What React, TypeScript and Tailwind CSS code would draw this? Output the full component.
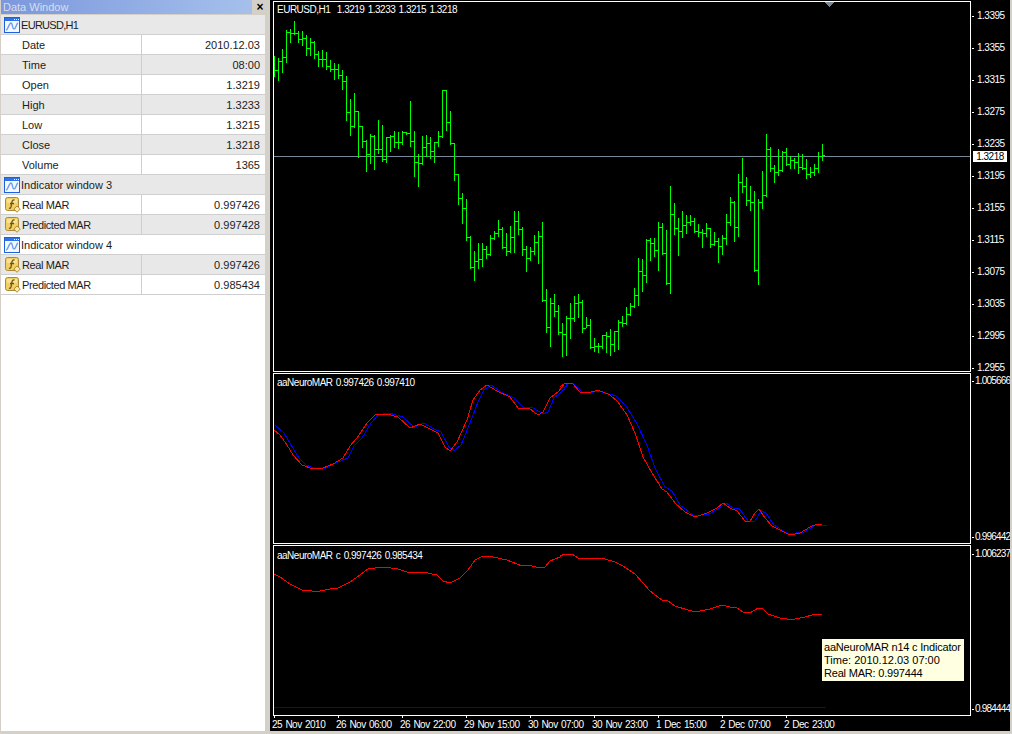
import React from "react";

type Bar = [number, number, number];
const z3: Bar[] = [[168,228,210],[174,240,184],[147,216,172],[90,186,96],[87,126,99],[63,102,99],[93,126,117],[93,135,114],[105,165,144],[114,165,126],[123,174,162],[153,198,178],[150,198,178],[157,207,198],[180,213,207],[189,237,207],[192,234,225],[210,267,243],[228,360,336],[297,405,378],[279,381,333],[333,471,378],[378,441,423],[420,513,462],[402,489,408],[405,507,447],[360,459,447],[375,483,477],[411,486,412],[405,453,408],[393,441,426],[396,444,426],[393,432,396],[396,402,399],[303,438,423],[393,528,485],[462,558,488],[408,492,441],[405,468,430],[411,474,453],[426,486,426],[393,438,408],[270,411,270],[270,390,366],[333,432,430],[430,540,521],[522,612,594]];
const z4: Bar[] = [[39,129,85],[57,180,172],[168,264,262],[213,300,244],[189,264,236],[189,258,206],[198,234,222],[165,225,175],[153,177,158],[120,168,148],[141,204,200],[159,225,214],[138,216,170],[93,216,124],[93,162,148]];
const z5: Bar[] = [[381,465,448],[438,513,475],[441,480,453],[405,462,426],[393,489,408],[366,603,600],[567,696,680],[594,738,610],[582,648,633],[615,702,696],[669,768,702],[648,765,655],[609,714,655],[588,663,610],[582,651,606],[600,696,685],[651,681,675],[657,744,742],[714,753,739],[729,756,739],[705,744,706],[696,756,708],[687,765,732],[693,753,693],[660,747,667],[648,678,670],[621,672,642],[609,645,618],[564,621,585],[474,615,513],[477,573,526],[417,546,420],[414,480,430],[414,468,450],[366,510,382],[369,462,458],[390,552,550],[258,579,342],[309,402,384],[354,465,393],[333,411,376],[345,399,367],[345,375,364],[354,396,393],[372,408,397],[387,441,400],[369,408,385],[384,441,432],[396,435,423],[414,486,438],[405,462,415],[342,432,365],[291,375,307],[303,423,380],[222,408,246],[174,276,259],[231,315,300],[258,330,306],[273,513,510],[297,552,307],[213,324,286],[102,288,147],[141,213,204],[195,246,216],[147,225,211],[153,213,156],[144,195,192],[168,204,180],[174,204,187],[159,219,202],[162,207,204],[177,234,223],[201,231,217],[192,225,205],[156,216,168],[132,180,166]];

const bars = [
  ...z3.map((b) => b.map((v) => Math.round(v / 3))),
  ...z4.map((b) => b.map((v) => Math.round(v / 3) + 180)),
  ...z5.map((b) => b.map((v) => Math.round(v / 3) + 100)),
];

type P = [number, number];
const pts = (list: P[], ox: number, oy: number) =>
  list.map(([x, y]) => `${Math.round(ox + x / 3)},${Math.round(oy + y / 3)}`).join(" ");

const redA: P[] = [[12,180],[30,195],[50,225],[70,255],[95,285],[130,297],[160,295],[190,282],[220,265],[240,228],[262,205],[290,158],[315,135],[350,131],[385,142],[420,175],[450,163],[480,177],[505,190],[525,232],[540,243],[560,215],[590,150],[610,90],[630,60],[650,46],[680,62],[720,80],[745,115],[780,116],[805,135],[820,125],[840,85],[865,65],[885,40]];
const blueA: P[] = [[12,165],[40,190],[60,225],[85,265],[105,285],[135,297],[165,294],[195,280],[230,265],[250,228],[272,205],[300,158],[322,135],[355,130],[395,142],[430,170],[458,160],[490,177],[510,185],[535,232],[550,243],[570,225],[598,160],[620,95],[640,60],[660,46],[690,66],[730,85],[755,112],[785,115],[815,133],[830,125],[850,85],[875,62],[893,40]];
const redB: P[] = [[0,50],[15,38],[35,38],[60,65],[85,69],[115,60],[150,75],[175,95],[200,135],[225,190],[250,260],[275,310],[305,358],[322,365],[345,400],[375,425],[405,440],[440,430],[470,415],[490,400],[510,415],[530,422],[555,452],[570,452],[585,428],[598,418],[615,445],[635,467],[660,480],[690,495],[720,490],[750,472],[770,463],[785,463]];
const blueB: P[] = [[0,68],[20,38],[40,42],[62,65],[85,69],[115,62],[165,77],[195,108],[225,155],[258,225],[283,295],[313,350],[333,362],[358,405],[400,438],[445,432],[470,418],[495,400],[515,414],[535,415],[560,452],[582,453],[600,422],[615,428],[638,465],[680,492],[730,487],[765,466],[797,466]];
const cA: P[] = [[12,103],[30,110],[60,133],[95,150],[125,154],[150,154],[180,146],[205,144],[240,125],[270,105],[295,88],[340,82],[385,88],[420,99],[460,97],[500,106],[520,122],[540,130],[570,115],[595,90],[615,60],[640,49],[670,50],[710,60],[755,78],[775,75],[810,85],[825,80],[840,62],[870,50]];
const cB: P[] = [[0,32],[15,28],[35,28],[55,40],[75,43],[85,40],[135,41],[165,50],[190,62],[225,88],[250,115],[270,138],[305,165],[325,168],[345,182],[385,195],[395,199],[420,197],[450,192],[485,181],[510,187],[530,188],[550,202],[570,205],[595,189],[605,190],[625,208],[660,218],[680,223],[705,223],[735,217],[755,211],[770,208],[785,208]];

function WindowIcon() {
  return (
    <svg width="16" height="16" viewBox="0 0 16 16" className="shrink-0" shapeRendering="crispEdges">
      <rect x="0.5" y="0.5" width="15" height="15" rx="1" fill="#f4f8ff" stroke="#1f62d8" />
      <rect x="1" y="1" width="14" height="3" fill="#2f74e4" />
      <rect x="10" y="2" width="1" height="1" fill="#fff" />
      <rect x="12" y="2" width="1" height="1" fill="#fff" />
      <rect x="14" y="2" width="1" height="1" fill="#fff" />
      <path d="M2 13 C4 13 5 6 7 6 C9 6 8 12 10 12 C12 12 12 7 14 6" fill="none" stroke="#6f9ce8" strokeWidth="1.4" shapeRendering="auto" />
    </svg>
  );
}

function FuncIcon() {
  return (
    <svg width="16" height="16" viewBox="0 0 16 16" className="shrink-0">
      <rect x="0.5" y="0.5" width="13" height="13" rx="2" fill="#f2cf62" stroke="#a98a3c" />
      <rect x="2" y="2" width="10" height="4" rx="1" fill="#f8e294" />
      <path d="M9.5 3 C7.5 2.6 7 4 6.8 5.5 L6 10 C5.8 11.2 5 11.5 4 11 M5 6.5 L9 6.5" fill="none" stroke="#6b5414" strokeWidth="1.3" />
      <path d="M12 9 L15.3 12 L12 15.3 L8.8 12 Z" fill="#fbe9a8" stroke="#b58a28" />
    </svg>
  );
}

function HeaderRow({ label, gray, tight }: { label: string; gray?: boolean; tight?: boolean }) {
  return (
    <div className={`flex h-[20px] items-center border-b border-[#cfcfcf] pl-[3px] ${gray ? "bg-[#e8e8e8]" : "bg-white"}`}>
      <WindowIcon />
      <span className={`mt-[2px] ml-[1px] ${tight ? "tracking-[-0.7px]" : ""}`}>{label}</span>
    </div>
  );
}

function DataRow({ label, value, gray, icon }: { label: string; value: string; gray?: boolean; icon?: boolean }) {
  return (
    <div className={`flex h-[20px] items-center border-b border-[#cfcfcf] ${gray ? "bg-[#e8e8e8]" : "bg-white"}`}>
      <div className={`flex h-full w-[140px] items-center ${icon ? "pl-[4px]" : "pl-[21px]"}`}>
        {icon && <FuncIcon />}
        <span className={`mt-[2px] ${icon ? "ml-[1px] tracking-[-0.4px]" : ""}`}>{label}</span>
      </div>
      <div className="flex h-full flex-1 items-center justify-end border-l border-[#cfcfcf] pt-[2px] pr-[5px]">{value}</div>
    </div>
  );
}

function AxisLabel({ text, wide }: { text: string; wide?: boolean }) {
  return (
    <div className="flex h-[14px] items-center whitespace-nowrap">
      <span className={`ml-[1px] h-px w-[2px] bg-white ${wide ? "mr-[1px]" : "mr-[3px]"}`} />
      <span className={wide ? "tracking-[-0.8px]" : ""}>{text}</span>
    </div>
  );
}

const chartText = "text-[10px] tracking-[-0.5px] [word-spacing:1px] text-white leading-[14px]";
const prices = ["1.3395","1.3355","1.3315","1.3275","1.3235","1.3195","1.3155","1.3115","1.3075","1.3035","1.2995","1.2955"];
const times = ["25 Nov 2010","26 Nov 06:00","26 Nov 22:00","29 Nov 15:00","30 Nov 07:00","30 Nov 23:00","1 Dec 15:00","2 Dec 07:00","2 Dec 23:00"];

export default function App() {
  return (
    <div className="flex h-[734px] w-[1012px] overflow-hidden bg-[#d4d0c8] font-['Liberation_Sans',sans-serif] text-[11px] text-[#1c1c1c]">
      <div className="flex h-[731px] w-[270px] flex-col">
        <div className="flex h-[15px] shrink-0 items-start pl-[1px]">
          <div className="flex h-[14px] w-[251px] items-center bg-gradient-to-r from-[#7c97dc] to-[#a6c0ec] pl-[2px] text-[11px] text-[#d6deec]">
            Data Window
          </div>
          <div className="flex h-[14px] flex-1 items-center justify-center pr-[2px] text-[12px] leading-none font-bold text-black">×</div>
        </div>
        <div className="ml-[1px] flex w-[264px] flex-1 flex-col bg-white">
          <HeaderRow label="EURUSD,H1" gray tight />
          <DataRow label="Date" value="2010.12.03" />
          <DataRow label="Time" value="08:00" gray />
          <DataRow label="Open" value="1.3219" />
          <DataRow label="High" value="1.3233" gray />
          <DataRow label="Low" value="1.3215" />
          <DataRow label="Close" value="1.3218" gray />
          <DataRow label="Volume" value="1365" />
          <HeaderRow label="Indicator window 3" gray />
          <DataRow icon label="Real MAR" value="0.997426" />
          <DataRow icon label="Predicted MAR" value="0.997428" gray />
          <HeaderRow label="Indicator window 4" />
          <DataRow icon label="Real MAR" value="0.997426" gray />
          <DataRow icon label="Predicted MAR" value="0.985434" />
        </div>
      </div>

      <div className={`relative flex h-[731px] w-[740px] flex-col gap-px overflow-hidden bg-black pt-px pl-[3px] ${chartText}`}>
        {/* price pane */}
        <div className="flex h-[371px] shrink-0">
          <div className="relative h-full w-[698px] shrink-0 border border-white">
            <svg width="696" height="369" viewBox="274 2 696 369" className="block" shapeRendering="crispEdges">
              <rect x="274" y="156" width="696" height="1" fill="#778899" />
              <path d="M825 2 L834 2 L829.5 7 Z" fill="#778899" />
              {bars.map((b, i) => {
                const x = 274 + i * 4;
                const prev = i > 0 ? bars[i - 1][2] : b[2];
                return (
                  <g key={i} fill="#00ff00">
                    <rect x={x} y={b[0]} width="1" height={b[1] - b[0] + 1} />
                    <rect x={x - 1} y={prev} width="1" height="1" />
                    <rect x={x + 1} y={b[2]} width="2" height="1" />
                  </g>
                );
              })}
            </svg>
            <div className="absolute top-px left-[3px] whitespace-pre">EURUSD,H1  1.3219 1.3233 1.3215 1.3218</div>
          </div>
          <div className="relative flex flex-col gap-[18px] pt-[8px]">
            {prices.map((p) => (
              <AxisLabel key={p} text={p} />
            ))}
            <div className="absolute top-[150px] left-[2px] flex h-[11px] w-[34px] items-center justify-center bg-white text-black">1.3218</div>
          </div>
        </div>

        {/* indicator window 3 */}
        <div className="flex h-[171px] shrink-0">
          <div className="relative h-full w-[698px] shrink-0 border border-white">
            <svg width="696" height="169" viewBox="274 374 696 169" className="block" shapeRendering="crispEdges">
              <polyline points={pts(blueA, 271, 370) + " " + pts(blueB, 561, 370)} fill="none" stroke="#0000ff" strokeWidth="1" />
              <polyline points={pts(redA, 270, 370) + " " + pts(redB, 560, 370)} fill="none" stroke="#ff0000" strokeWidth="1" />
            </svg>
            <div className="absolute top-[2px] left-[3px] whitespace-pre">aaNeuroMAR 0.997426 0.997410</div>
          </div>
          <div className="flex flex-col justify-between pt-px">
            <AxisLabel wide text="1.005666" />
            <AxisLabel wide text="0.996442" />
          </div>
        </div>

        {/* indicator window 4 */}
        <div className="flex h-[171px] shrink-0">
          <div className="relative h-full w-[698px] shrink-0 border border-white">
            <svg width="696" height="169" viewBox="274 546 696 169" className="block" shapeRendering="crispEdges">
              <rect x="274" y="707" width="552" height="1" fill="#0000c8" />
              <polyline points={pts(cA, 270, 540) + " " + pts(cB, 560, 545)} fill="none" stroke="#ff0000" strokeWidth="1" />
            </svg>
            <div className="absolute top-[3px] left-[3px] whitespace-pre">aaNeuroMAR c 0.997426 0.985434</div>
            <div className="absolute top-[93px] left-[548px] flex h-[42px] w-[142px] flex-col justify-center bg-[#ffffe1] pl-[2px] text-[11px] leading-[13px] tracking-normal whitespace-nowrap text-black [word-spacing:0px]">
              <span className="tracking-[-0.2px]">aaNeuroMAR n14 c Indicator</span>
              <span>Time: 2010.12.03 07:00</span>
              <span className="tracking-[-0.2px]">Real MAR: 0.997444</span>
            </div>
          </div>
          <div className="flex flex-col justify-between pt-[2px]">
            <AxisLabel wide text="1.006237" />
            <AxisLabel wide text="0.984444" />
          </div>
        </div>

        {/* time axis */}
        <div className="-mt-px -ml-px flex">
          {times.map((t) => (
            <div key={t} className="w-[64px] shrink-0 whitespace-nowrap">
              <span className="ml-[2px] block h-[2px] w-px bg-white" />
              <span className="block">{t}</span>
            </div>
          ))}
        </div>
      </div>
    </div>
  );
}
